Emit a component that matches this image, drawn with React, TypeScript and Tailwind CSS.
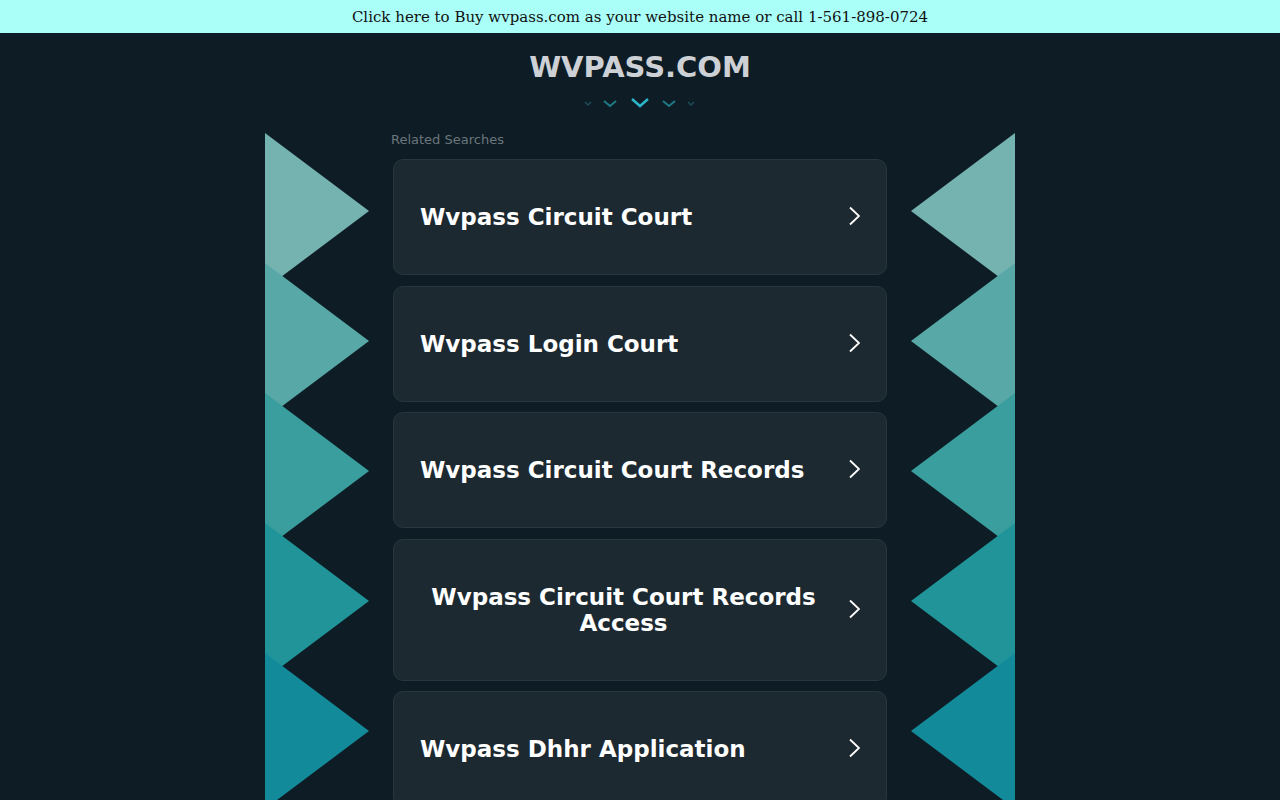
const searches = [
  'Wvpass Circuit Court',
  'Wvpass Login Court',
  'Wvpass Circuit Court Records',
  'Wvpass Circuit Court Records Access',
  'Wvpass Dhhr Application',
]

const shades = ['#75b3b1', '#58a8a8', '#3a9d9e', '#219499', '#128a9a']

function Zigzag({ side }: { side: 'left' | 'right' }) {
  return (
    <svg width="104" height="676" viewBox="0 0 104 676" className="shrink-0">
      {shades.map((c, i) => {
        const t = i * 130
        const pts =
          side === 'left'
            ? `0,${t} 104,${t + 78} 0,${t + 156}`
            : `104,${t} 0,${t + 78} 104,${t + 156}`
        return <polygon key={i} points={pts} fill={c} />
      })}
    </svg>
  )
}

function Chevrons() {
  return (
    <svg width="120" height="14" viewBox="0 0 120 14" className="mx-auto mt-[12px] block">
      <polyline points="5,6 8,9 11,6" fill="none" stroke="#1c4d58" strokeWidth="1.5" />
      <polyline points="24,5 30,10 36,5" fill="none" stroke="#1f7a88" strokeWidth="2" />
      <polyline points="52,3 60,10 68,3" fill="none" stroke="#2bb5c8" strokeWidth="2.5" />
      <polyline points="83,5 89,10 95,5" fill="none" stroke="#1f7a88" strokeWidth="2" />
      <polyline points="108,6 111,9 114,6" fill="none" stroke="#1c4d58" strokeWidth="1.5" />
    </svg>
  )
}

function Card({ label }: { label: string }) {
  return (
    <a
      href="#"
      className="flex items-center gap-[21px] rounded-[10px] border border-[#27373f] bg-[#1d2930] py-[44px] pl-[26px] pr-[26px]"
    >
      <span className="text-center text-[23px] font-bold leading-[26px] text-white">{label}</span>
      <svg width="12" height="20" viewBox="0 0 12 20" className="-mt-[2px] ml-auto shrink-0">
        <polyline points="2,1.5 11,10 2,18.5" fill="none" stroke="#ffffff" strokeWidth="1.8" />
      </svg>
    </a>
  )
}

export default function App() {
  return (
    <div className="min-h-[800px] bg-[#0e1d25] font-['DejaVu_Sans',sans-serif]">
      <div className="flex h-[33px] items-center justify-center bg-[#aafff9] pt-[2px] font-['DejaVu_Serif',serif] text-[15px] text-[#111]">
        Click here to Buy wvpass.com as your website name or call 1-561-898-0724
      </div>
      <h1 className="mt-[17px] text-center text-[29px] font-bold leading-[34px] text-[#cdd1d5]">
        WVPASS.COM
      </h1>
      <Chevrons />
      <div className="mx-auto mt-[23px] flex w-[750px] items-start">
        <Zigzag side="left" />
        <div className="-mt-[1px] flex-1 px-[24px]">
          <div className="mb-[11px] -ml-[2px] text-[13px] leading-[16px] text-[#6b757c]">Related Searches</div>
          <div className="flex flex-col gap-[10.5px]">
            {searches.map((s) => (
              <Card key={s} label={s} />
            ))}
          </div>
        </div>
        <Zigzag side="right" />
      </div>
    </div>
  )
}
